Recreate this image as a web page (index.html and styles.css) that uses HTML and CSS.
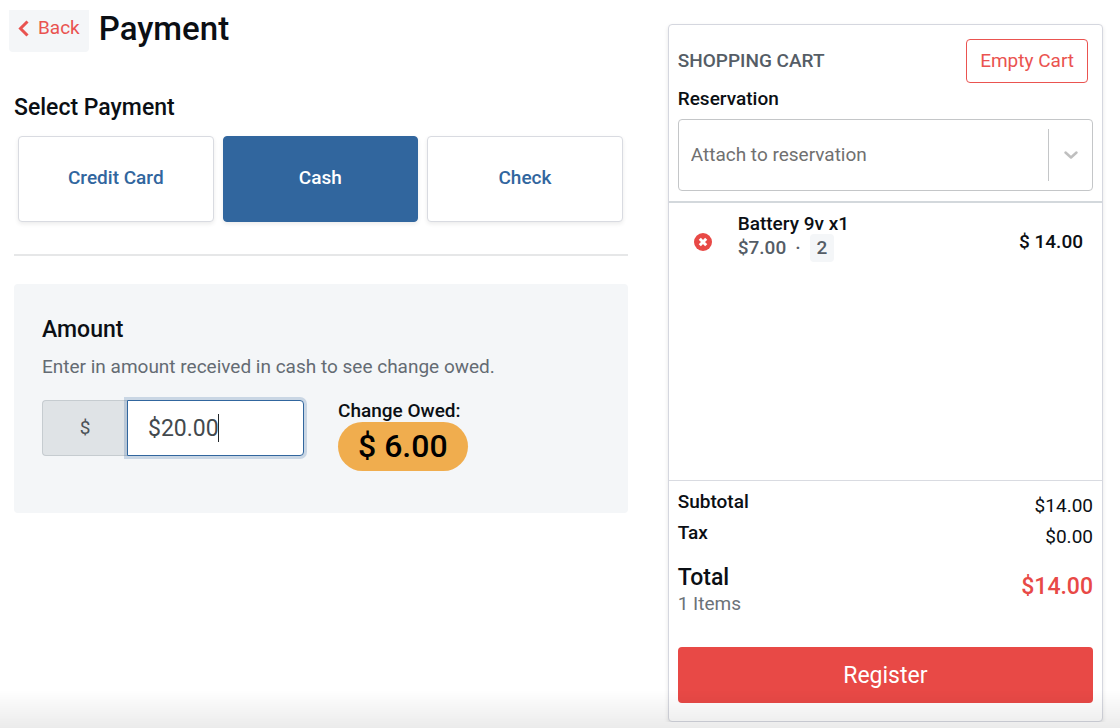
FILE: index.html
```html
<!DOCTYPE html>
<html lang="en">
<head>
    <meta charset="UTF-8">
    <meta name="viewport" content="width=device-width, initial-scale=1.0">
    <title>Payment</title>
    <link rel="stylesheet" href="styles.css">
</head>
<body>
    <div class="page">
        <main class="payment">
            <header class="page-header">
                <a class="back" href="#">
                    <svg width="11" height="17" viewBox="0 0 11 17" aria-hidden="true"><path d="M9.500 1.500 2.500 8.500l7 7" fill="none" stroke="currentColor" stroke-width="3"/></svg>
                    Back
                </a>
                <h1>Payment</h1>
            </header>
            <h2>Select Payment</h2>
            <div class="methods">
                <button type="button" class="method">Credit Card</button>
                <button type="button" class="method active">Cash</button>
                <button type="button" class="method">Check</button>
            </div>
            <hr>
            <section class="amount">
                <h2><label for="cash">Amount</label></h2>
                <p class="hint">Enter in amount received in cash to see change owed.</p>
                <div class="amount-row">
                    <div class="input-group">
                        <span class="prefix">$</span>
                        <input type="text" id="cash" value="$20.00">
                        <span class="caret"></span>
                    </div>
                    <div class="change">
                        <div class="change-label">Change Owed:</div>
                        <div class="change-value">$ 6.00</div>
                    </div>
                </div>
            </section>
        </main>
        <aside class="cart">
            <div class="cart-top">
                <div class="cart-header">
                    <h3>SHOPPING CART</h3>
                    <button type="button" class="empty">Empty Cart</button>
                </div>
                <label class="strong" for="reservation">Reservation</label>
                <div class="select-box">
                    <select id="reservation">
                        <option>Attach to reservation</option>
                    </select>
                    <span class="divider"></span>
                    <svg width="16" height="10" viewBox="0 0 16 10" aria-hidden="true"><path d="M2.500 2.500l5.500 5 5.500-5" fill="none" stroke="currentColor" stroke-width="2.500" stroke-linecap="round" stroke-linejoin="round"/></svg>
                </div>
            </div>
            <div class="items">
                <div class="item">
                    <button type="button" class="remove" aria-label="Remove">
                        <svg width="18" height="18" viewBox="0 0 18 18" aria-hidden="true"><circle cx="9" cy="9" r="9" fill="#e84946"/><path d="M5.800 5.800l6.400 6.400M12.200 5.800l-6.400 6.400" stroke="#fff" stroke-width="3"/></svg>
                    </button>
                    <div class="item-info">
                        <div class="item-name">Battery 9v x1</div>
                        <div class="item-price">$7.00 <span class="dot">·</span> <span class="qty">2</span></div>
                    </div>
                    <div class="item-total">$ 14.00</div>
                </div>
            </div>
            <div class="totals">
                <div class="line"><span class="strong">Subtotal</span><span class="value">$14.00</span></div>
                <div class="line"><span class="strong">Tax</span><span class="value">$0.00</span></div>
                <div class="total">
                    <div>
                        <div class="total-label">Total</div>
                        <div class="count">1 Items</div>
                    </div>
                    <div class="total-value">$14.00</div>
                </div>
                <button type="button" class="register">Register</button>
            </div>
        </aside>
    </div>
    <div class="bottom-shade"></div>
</body>
</html>
```
FILE: styles.css
```css
* {
    box-sizing: border-box;
}
body {
    font-family: Roboto, sans-serif;
    font-size: 19px;
    line-height: 24px;
    color: #0b0f14;
    background: #fff;
    margin: 0;
}
h1, h2, h3, p {
    margin: 0;
    font-weight: 500;
}
button, input, select {
    font-family: inherit;
    font-size: 19px;
}
button {
    cursor: pointer;
}
.page {
    display: grid;
    grid-template-columns: 1.41fr 1fr;
    gap: 40px;
    align-items: start;
    padding: 0 17px 0 14px;
}
.payment {
    padding-top: 10px;
}
.page-header {
    display: flex;
    gap: 10px;
    margin: 0 0 42px -5px;
}
.back {
    display: flex;
    align-items: center;
    gap: 9px;
    height: 42px;
    padding: 0 9px 6px 9px;
    color: #e95350;
    background: #f4f6f8;
    border-radius: 0 0 4px 4px;
    text-decoration: none;
}
h1 {
    font-size: 33px;
    line-height: 38px;
}
h2 {
    font-size: 23px;
    line-height: 28px;
}
.methods {
    display: grid;
    grid-template-columns: repeat(3, 1fr);
    gap: 9px;
    padding: 14px 5px 32px 4px;
}
.method {
    height: 86px;
    padding-bottom: 4px;
    font-weight: 500;
    color: #31669e;
    background: #fff;
    border: 1px solid #d9dbe1;
    border-radius: 4px;
    box-shadow: 0 2px 4px rgba(0, 0, 0, 0.08);
}
.method.active {
    color: #fff;
    background: #31669e;
    border-color: #31669e;
}
hr {
    margin: 0 0 28px;
    border: 0;
    border-top: 2px solid #e6e7e8;
}
.amount {
    padding: 32px 28px 42px;
    background: #f4f6f8;
    border-radius: 4px;
}
.hint {
    margin: 11px 0 21px;
    font-weight: 400;
    color: #646b73;
}
.amount-row {
    display: flex;
    gap: 34px;
}
.input-group {
    position: relative;
    display: flex;
    height: 56px;
}
.prefix {
    display: flex;
    align-items: center;
    justify-content: center;
    width: 85px;
    color: #4b5257;
    background: #dfe3e6;
    border: 1px solid #c6ccd0;
    border-right: 0;
    border-radius: 4px 0 0 4px;
}
.input-group input {
    width: 177px;
    padding: 0 20px;
    font-size: 23px;
    color: #43494e;
    caret-color: transparent;
    background: #fff;
    border: 1px solid #31669e;
    border-radius: 0 4px 4px 0;
    outline: none;
    box-shadow: 0 0 0 3px rgba(49, 102, 158, 0.22);
}
.caret {
    position: absolute;
    top: 14px;
    left: 176px;
    width: 1px;
    height: 28px;
    background: #22272b;
}
.change-label {
    line-height: 22px;
    font-weight: 500;
}
.change-value {
    width: fit-content;
    padding: 0 20px;
    font-size: 32px;
    line-height: 49px;
    font-weight: 500;
    color: #000;
    background: #f0ad4e;
    border-radius: 25px;
}
.cart {
    margin-top: 24px;
    background: #fff;
    border: 1px solid #d5d7df;
    border-radius: 4px;
    box-shadow: 0 2px 4px rgba(0, 0, 0, 0.1);
}
.cart-top {
    padding: 14px 9px 10px;
    border-bottom: 2px solid #d3d8dc;
}
.cart-header {
    display: flex;
    justify-content: space-between;
    align-items: center;
    padding-right: 5px;
    margin-bottom: 4px;
}
h3 {
    font-size: 19px;
    color: #555d66;
}
.empty {
    height: 44px;
    padding: 0 13px 2px;
    color: #ea5350;
    background: #fff;
    border: 1px solid #ea5350;
    border-radius: 4px;
}
.strong {
    font-weight: 500;
}
.select-box {
    display: flex;
    align-items: center;
    height: 72px;
    margin-top: 8px;
    padding-right: 13px;
    color: #bfbfbf;
    border: 1px solid #c4c6c8;
    border-radius: 4px;
}
.select-box select {
    flex: 1;
    height: 70px;
    padding: 0 12px 2px;
    color: #707070;
    background: transparent;
    border: 0;
    appearance: none;
}
.divider {
    width: 1px;
    height: 52px;
    margin-right: 14px;
    background: #c4c6c8;
}
.items {
    height: 277px;
    padding: 9px 19px 0 25px;
}
.item {
    display: flex;
    align-items: center;
}
.remove {
    display: flex;
    margin-right: 26px;
    padding: 0;
    background: none;
    border: 0;
}
.item-info {
    flex: 1;
    padding-bottom: 12px;
}
.item-name {
    font-weight: 500;
}
.item-price {
    display: flex;
    align-items: center;
    gap: 9px;
    height: 24px;
    color: #555d66;
    font-weight: 500;
}
.qty {
    padding: 2px 7px;
    background: #f4f6f8;
    border-radius: 4px;
}
.item-total {
    font-weight: 500;
}
.totals {
    padding: 9px 9px 18px;
    border-top: 1px solid #d9dbe1;
}
.line {
    display: flex;
    justify-content: space-between;
    height: 31px;
}
.value {
    padding-top: 4px;
}
.total {
    display: flex;
    justify-content: space-between;
    align-items: center;
    margin: 12px 0 31px;
}
.total-label {
    font-size: 23px;
    line-height: 28px;
    font-weight: 500;
}
.count {
    color: #6b7278;
}
.total-value {
    padding-bottom: 6px;
    font-size: 23px;
    font-weight: 500;
    color: #e84946;
}
.register {
    width: 100%;
    height: 56px;
    font-size: 23px;
    color: #fff;
    background: #e84946;
    border: 0;
    border-radius: 4px;
}
/* soft shade along the bottom of the window */
.bottom-shade {
    position: fixed;
    left: 0;
    right: 0;
    bottom: 0;
    height: 38px;
    background: linear-gradient(rgba(0, 0, 0, 0), rgba(0, 0, 0, 0.08));
    pointer-events: none;
}
```
